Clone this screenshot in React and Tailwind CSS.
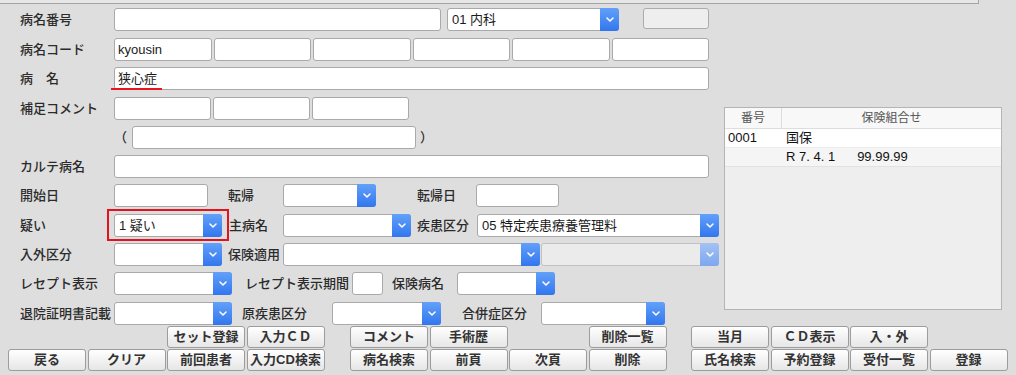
import React from 'react'

const Chevron = () => (
  <svg width="8" height="5" viewBox="0 0 8 5" fill="none">
    <path d="M1 1l3 3 3-3" stroke="white" strokeWidth="1.5" strokeLinecap="round" strokeLinejoin="round" />
  </svg>
)

const Label = ({ className = '', children }) => (
  <div className={`text-[13px] font-medium text-[#2b2b2b] whitespace-nowrap ${className}`}>{children}</div>
)

const Input = ({ className = '', children }) => (
  <div className={`relative h-[23px] bg-white border border-[#a9a9a9] rounded-[3px] flex items-center px-[3px] text-[13px] text-[#1a1a1a] ${className}`}>
    {children}
  </div>
)

const Select = ({ className = '', value, disabled }) => (
  <div
    className={`relative h-[23px] flex rounded-[3px] border ${
      disabled ? 'bg-[#ebebeb] border-[#c2c2c2]' : 'bg-white border-[#a9a9a9]'
    } ${className}`}
  >
    <div className="flex-1 flex items-center px-[4px] text-[13px] text-[#1a1a1a] whitespace-nowrap overflow-hidden">{value}</div>
    <div
      className={`w-[19px] -my-px -mr-px rounded-r-[3px] flex items-center justify-center ${
        disabled ? 'bg-linear-to-b from-[#a3c1f4] to-[#7ea7ee]' : 'bg-linear-to-b from-[#62a0f9] to-[#3276ee]'
      }`}
    >
      <Chevron />
    </div>
  </div>
)

const Btn = ({ children }) =>
  children ? (
    <button className="h-[22px] w-[78px] rounded-[3px] border border-[#9c9c9c] bg-linear-to-b from-white to-[#e6e6e6] text-[13px] font-bold text-[#333] flex items-center justify-center whitespace-nowrap">
      {children}
    </button>
  ) : (
    <div className="h-[22px] w-[78px]"></div>
  )

const ButtonGroup = ({ top, bottom, className = '' }) => (
  <div className={`grid grid-cols-[repeat(4,78px)] gap-x-[1.5px] gap-y-[1px] ${className}`}>
    {top.map((t, i) => (
      <Btn key={'t' + i}>{t}</Btn>
    ))}
    {bottom.map((t, i) => (
      <Btn key={'b' + i}>{t}</Btn>
    ))}
  </div>
)

export default function App() {
  return (
    <div className="w-[1016px] h-[375px] overflow-hidden bg-[#dedede] font-['Liberation_Sans','Noto_Sans_CJK_JP',sans-serif]">
      {/* top strip */}
      <div className="h-[4px] w-[979px] bg-[#e6e6e6] border-b border-r border-[#a4a4a4]"></div>

      <div className="flex">
        {/* form */}
        <div className="w-[724px]">
          <div className="flex items-center h-[23px] mt-[4px]">
            <Label className="w-[114px] pl-[20px]">病名番号</Label>
            <Input className="w-[327px]" />
            <Select className="ml-[6px] w-[172px]" value="01 内科" />
            <div className="self-start ml-[24px] w-[66px] h-[21px] rounded-[3px] border border-[#acacac] bg-[#eeeeee]"></div>
          </div>

          <div className="flex items-center h-[23px] mt-[7px]">
            <Label className="w-[114px] pl-[20px]">病名コード</Label>
            <div className="flex w-[595px] gap-[2px]">
              <Input className="flex-1">kyousin</Input>
              <Input className="flex-1" />
              <Input className="flex-1" />
              <Input className="flex-1" />
              <Input className="flex-1" />
              <Input className="flex-1" />
            </div>
          </div>

          <div className="flex items-center h-[23px] mt-[6px]">
            <Label className="w-[114px] pl-[20px]">病　名</Label>
            <Input className="w-[595px]">
              狭心症
              <div className="absolute left-[-4px] top-[20px] w-[51px] h-[2px] bg-[#e8141f]"></div>
            </Input>
          </div>

          <div className="flex items-center h-[23px] mt-[7px]">
            <Label className="w-[114px] pl-[20px]">補足コメント</Label>
            <div className="flex gap-[2px]">
              <Input className="w-[97px]" />
              <Input className="w-[97px]" />
              <Input className="w-[97px]" />
            </div>
          </div>

          <div className="flex items-center h-[23px] mt-[6px]">
            <div className="w-[114px]"></div>
            <Label>（</Label>
            <Input className="ml-[5px] w-[284px]" />
            <Label className="ml-[4px]">）</Label>
          </div>

          <div className="flex items-center h-[23px] mt-[6px]">
            <Label className="w-[114px] pl-[20px]">カルテ病名</Label>
            <Input className="w-[595px]" />
          </div>

          <div className="flex items-center h-[23px] mt-[6px]">
            <Label className="w-[114px] pl-[20px]">開始日</Label>
            <Input className="w-[94px]" />
            <Label className="ml-[20px] w-[55px]">転帰</Label>
            <Select className="w-[93px]" />
            <Label className="ml-[41px] w-[59px]">転帰日</Label>
            <Input className="w-[83px]" />
          </div>

          <div className="flex items-center h-[23px] mt-[7px]">
            <Label className="w-[114px] pl-[20px]">疑い</Label>
            <div className="relative">
              <Select className="w-[108px]" value="1 疑い" />
              <div className="absolute -left-[7px] -right-[7px] -top-[5px] -bottom-[4px] border-2 border-[#e5121d]"></div>
            </div>
            <Label className="ml-[7px] w-[54px]">主病名</Label>
            <Select className="w-[128px]" />
            <Label className="ml-[6px] w-[60px]">疾患区分</Label>
            <Select className="w-[242px]" value="05 特定疾患療養管理料" />
          </div>

          <div className="flex items-center h-[23px] mt-[6px]">
            <Label className="w-[114px] pl-[20px]">入外区分</Label>
            <Select className="w-[108px]" />
            <Label className="ml-[6px] w-[55px]">保険適用</Label>
            <Select className="w-[257px]" />
            <Select className="ml-[1px] w-[178px]" disabled />
          </div>

          <div className="flex items-center h-[23px] mt-[6px]">
            <Label className="w-[114px] pl-[20px]">レセプト表示</Label>
            <Select className="w-[118px]" />
            <Label className="ml-[13px] w-[107px]">レセプト表示期間</Label>
            <Input className="w-[31px]" />
            <Label className="ml-[9px] w-[65px]">保険病名</Label>
            <Select className="w-[98px]" />
          </div>

          <div className="flex items-center h-[23px] mt-[7px]">
            <Label className="w-[114px] pl-[20px]">退院証明書記載</Label>
            <Select className="w-[118px]" />
            <Label className="ml-[10px] w-[90px]">原疾患区分</Label>
            <Select className="w-[109px]" />
            <Label className="ml-[21px] w-[79px]">合併症区分</Label>
            <Select className="w-[124px]" />
          </div>
        </div>

        {/* insurance table */}
        <div className="w-[278px] h-[203px] mt-[103px] border border-[#b4b4b4] bg-[#eeeeee] text-[13px] text-[#111]">
          <div className="flex h-[21px] bg-[#f8f8f8] border-b border-[#dddddd] text-[12px] text-[#555]">
            <div className="w-[57px] border-r border-[#dddddd] flex items-center justify-center">番号</div>
            <div className="flex-1 flex items-center justify-center">保険組合せ</div>
          </div>
          <div className="flex h-[19px] bg-white border-b border-[#ececec]">
            <div className="w-[57px] pl-[3px] flex items-center">0001</div>
            <div className="flex-1 pl-[4px] flex items-center">国保</div>
          </div>
          <div className="flex h-[19px] bg-[#f5f5f5] border-b border-[#e2e2e2]">
            <div className="w-[57px]"></div>
            <div className="flex-1 pl-[4px] flex items-center">
              R 7. 4. 1<span className="ml-[22px]">99.99.99</span>
            </div>
          </div>
        </div>
      </div>

      {/* buttons */}
      <div className="flex mt-[1px] pl-[8px]">
        <ButtonGroup top={[null, null, 'セット登録', '入力ＣＤ']} bottom={['戻る', 'クリア', '前回患者', '入力CD検索']} />
        <ButtonGroup className="ml-[25.5px]" top={['コメント', '手術歴', null, '削除一覧']} bottom={['病名検索', '前頁', '次頁', '削除']} />
        <ButtonGroup className="ml-[24.5px]" top={['当月', 'ＣＤ表示', '入・外', null]} bottom={['氏名検索', '予約登録', '受付一覧', '登録']} />
      </div>
    </div>
  )
}
